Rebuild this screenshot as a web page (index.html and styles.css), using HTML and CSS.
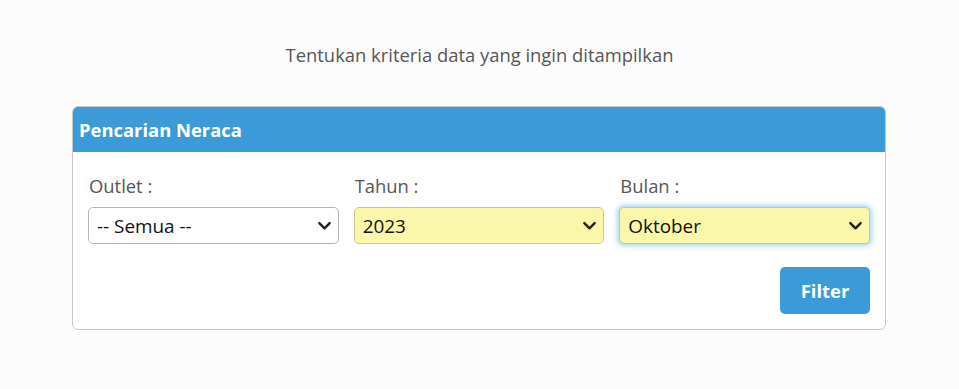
FILE: index.html
```html
<!DOCTYPE html>
<html>
<head>
    <title>Pencarian Neraca</title>
    <link rel="stylesheet" href="styles.css">
</head>
<body>
    <p class="intro">Tentukan kriteria data yang ingin ditampilkan</p>

    <div class="card">
        <div class="card-header">Pencarian Neraca</div>
        <div class="card-body">
            <div class="fields">
                <div class="field">
                    <label for="outlet">Outlet :</label>
                    <div class="select-wrap">
                        <select id="outlet">
                            <option>-- Semua --</option>
                        </select>
                        <svg class="chevron" viewBox="0 0 16 16"><path d="M2.5 5.5 8 11l5.5-5.5" fill="none" stroke="#222" stroke-width="2.6" stroke-linecap="round" stroke-linejoin="round"/></svg>
                    </div>
                </div>
                <div class="field">
                    <label for="tahun">Tahun :</label>
                    <div class="select-wrap">
                        <select id="tahun" class="filled">
                            <option>2023</option>
                        </select>
                        <svg class="chevron" viewBox="0 0 16 16"><path d="M2.5 5.5 8 11l5.5-5.5" fill="none" stroke="#222" stroke-width="2.6" stroke-linecap="round" stroke-linejoin="round"/></svg>
                    </div>
                </div>
                <div class="field">
                    <label for="bulan">Bulan :</label>
                    <div class="select-wrap">
                        <select id="bulan" class="filled focused">
                            <option>Oktober</option>
                        </select>
                        <svg class="chevron" viewBox="0 0 16 16"><path d="M2.5 5.5 8 11l5.5-5.5" fill="none" stroke="#222" stroke-width="2.6" stroke-linecap="round" stroke-linejoin="round"/></svg>
                    </div>
                </div>
            </div>
            <div class="actions">
                <button type="button">Filter</button>
            </div>
        </div>
    </div>
</body>
</html>
```

FILE: styles.css
```css
body {
    margin: 0;
    background-color: #fcfcfc;
    font-family: "Open Sans", "Noto Sans", sans-serif;
    color: #212529;
}
.intro {
    margin: 0;
    padding-top: 42px;
    text-align: center;
    font-size: 18.4px;
    color: #555;
    line-height: 26px;
}
.card {
    margin: 38px 73px 0 72px;
    background-color: #fff;
    border: 1px solid #c8c8c8;
    border-radius: 6px;
    overflow: hidden;
}
.card-header {
    background-color: #3b9bd8;
    color: #fff;
    font-weight: bold;
    font-size: 18.4px;
    height: 45px;
    line-height: 45px;
    padding-left: 6px;
}
.card-body {
    padding: 22px 15px 15px 15px;
}
.fields {
    display: grid;
    grid-template-columns: 1fr 1fr 1fr;
    gap: 15px;
}
label {
    display: block;
    font-size: 18.4px;
    color: #555;
    padding-left: 1px;
    margin-bottom: 9px;
    line-height: 24px;
}
.select-wrap {
    position: relative;
}
select {
    appearance: none;
    -webkit-appearance: none;
    width: 100%;
    height: 37px;
    padding: 0 30px 0 8px;
    font-family: inherit;
    font-size: 18.9px;
    color: #111;
    background-color: #fff;
    border: 1px solid #b5b5b5;
    border-radius: 5px;
    outline: none;
}
select.filled {
    background-color: #fbf7a8;
    border-color: #cfc78a;
}
select.focused {
    box-shadow: 0 0 0 1px #bfe2f5, 0 0 5px 2px #a9d7f0;
}
.chevron {
    position: absolute;
    right: 7px;
    top: 11px;
    width: 15px;
    height: 15px;
    pointer-events: none;
}
.actions {
    display: flex;
    justify-content: flex-end;
    margin-top: 23px;
}
button {
    width: 90px;
    height: 47px;
    background-color: #3b9bd8;
    color: #fff;
    font-family: inherit;
    font-weight: bold;
    font-size: 18.4px;
    border: none;
    border-radius: 5px;
    cursor: pointer;
}
```
